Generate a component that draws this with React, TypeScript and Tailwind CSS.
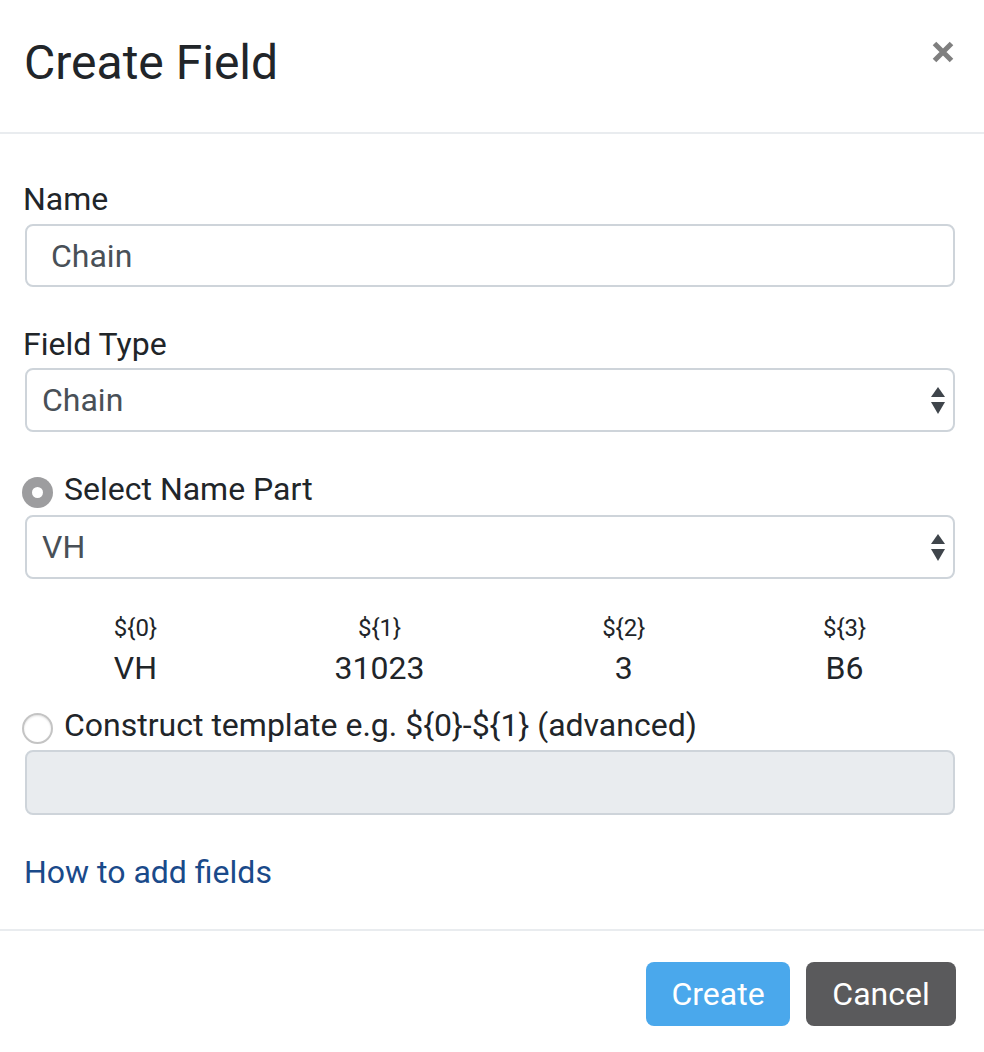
import React from "react"

const font = { fontFamily: "Roboto, 'Noto Sans', sans-serif" }

function SelectArrows() {
  return (
    <svg width="14" height="27" viewBox="0 0 14 27" className="shrink-0">
      <polygon points="7,0 14,10 0,10" fill="#3f454b" />
      <polygon points="0,15 14,15 7,27" fill="#3f454b" />
    </svg>
  )
}

function FakeSelect({ value, className = "" }: { value: string; className?: string }) {
  return (
    <div
      className={`flex h-[64px] items-center justify-between rounded-[8px] border-2 border-[#ced4da] bg-white pl-[15px] pr-[8px] ${className}`}
    >
      <span className="text-[32px] leading-[48px] text-[#495057]">{value}</span>
      <SelectArrows />
    </div>
  )
}

function Radio({ checked }: { checked?: boolean }) {
  if (checked) {
    return (
      <span className="mt-[12px] ml-[-3px] flex h-[31px] w-[31px] shrink-0 items-center justify-center rounded-full bg-[#9d9d9f]">
        <span className="h-[11px] w-[11px] rounded-full bg-white" />
      </span>
    )
  }
  return (
    <span className="mt-[12px] ml-[-3px] h-[31px] w-[31px] shrink-0 rounded-full border-2 border-[#c4c4c4] bg-white shadow-[inset_0_1px_2px_rgba(0,0,0,0.12)]" />
  )
}

const parts = [
  { key: "${0}", value: "VH" },
  { key: "${1}", value: "31023" },
  { key: "${2}", value: "3" },
  { key: "${3}", value: "B6" },
]

export default function App() {
  return (
    <div className="min-h-[1052px] w-[984px] bg-white text-[#212529]" style={font}>
      {/* header */}
      <div className="flex items-start justify-between border-b-2 border-[#e9ecef] pb-[40px] pl-[24px] pr-[30px] pt-[34px]">
        <h4 className="text-[48px] font-normal leading-[58px]">Create Field</h4>
        <svg width="22" height="22" viewBox="0 0 22 22" className="mt-[7px]">
          <path d="M2.5 2.5 L19.5 19.5 M19.5 2.5 L2.5 19.5" stroke="#7f7f7f" strokeWidth="5" />
        </svg>
      </div>

      {/* body */}
      <div className="pb-[33px] pl-[25px] pr-[29px] pt-[41px]">
        <label className="-ml-[2px] block text-[32px] leading-[48px]">Name</label>
        <div className="mt-px flex h-[63px] items-center rounded-[8px] border-2 border-[#ced4da] pl-[24px]">
          <span className="text-[32px] text-[#495057]">Chain</span>
        </div>

        <label className="-ml-[2px] mt-[33px] block text-[32px] leading-[48px]">Field Type</label>
        <FakeSelect value="Chain" />

        <div className="mt-[33px] flex items-start gap-[11px]">
          <Radio checked />
          <span className="text-[32px] leading-[48px]">Select Name Part</span>
        </div>
        <FakeSelect value="VH" className="mt-[2px]" />

        <div className="mt-[31px] flex justify-around">
          {parts.map((p) => (
            <div key={p.key} className="flex flex-col items-center">
              <span className="text-[24px] leading-[36px]">{p.key}</span>
              <span className="-mt-[2px] text-[32px] leading-[48px]">{p.value}</span>
            </div>
          ))}
        </div>

        <div className="mt-[9px] flex items-start gap-[11px]">
          <Radio />
          <span className="text-[32px] leading-[48px]">Construct template e.g. {"${0}-${1}"} (advanced)</span>
        </div>
        <div className="mt-[1px] h-[65px] rounded-[8px] border-2 border-[#ced4da] bg-[#e9ecef]" />

        <a className="-ml-[1px] mt-[33px] block text-[32px] leading-[48px] text-[#1a4a8a]">How to add fields</a>
      </div>

      {/* footer */}
      <div className="flex justify-end gap-[16px] border-t-2 border-[#e9ecef] pr-[28px] pt-[31px]">
        <button className="h-[64px] w-[144px] rounded-[8px] bg-[#4aa8ec] text-[32px] text-white">Create</button>
        <button className="h-[64px] w-[150px] rounded-[8px] bg-[#5a5a5c] text-[32px] text-white">Cancel</button>
      </div>
    </div>
  )
}
